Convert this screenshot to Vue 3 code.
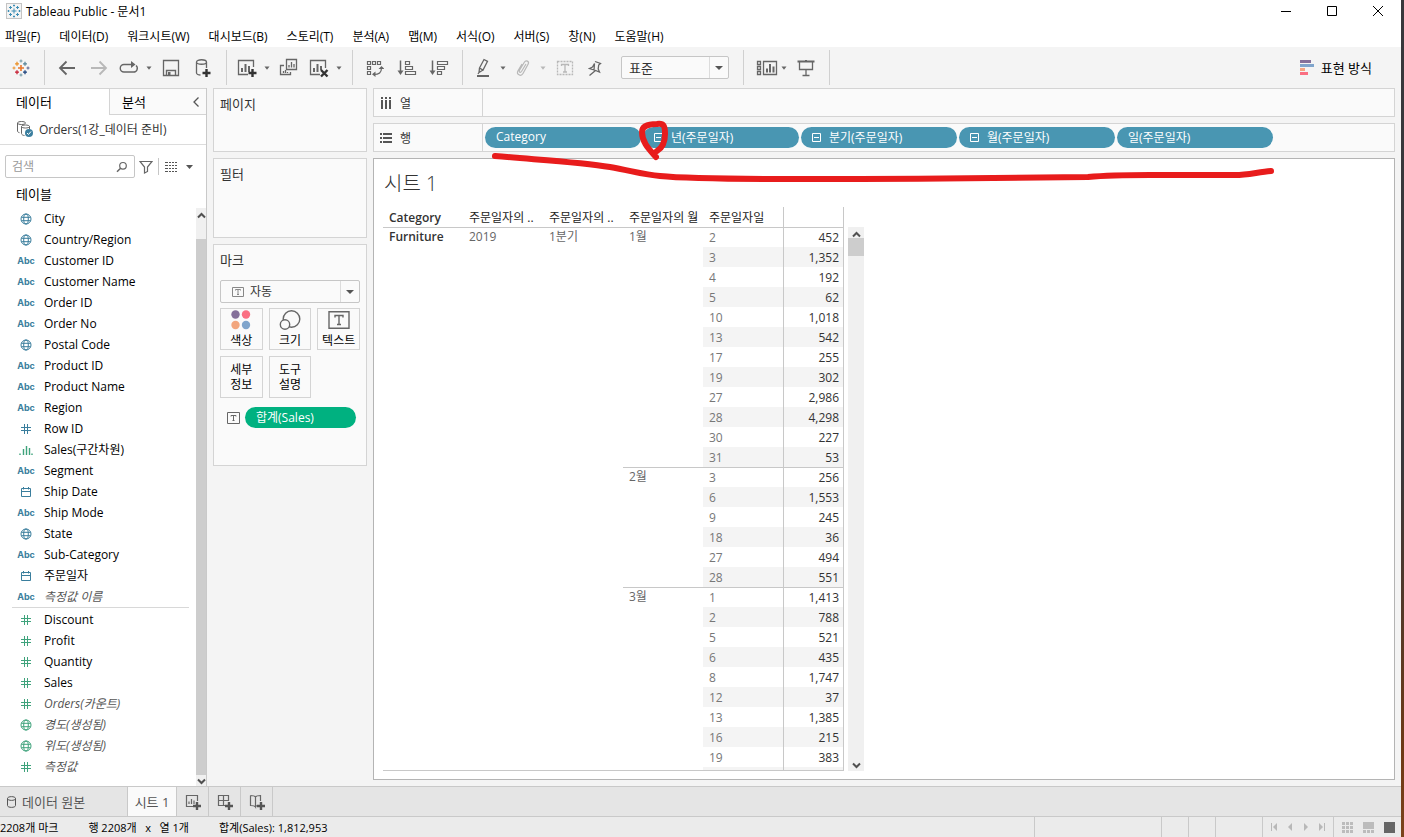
<script setup>
import { ref } from 'vue'

const menus = ['파일(F)', '데이터(D)', '워크시트(W)', '대시보드(B)', '스토리(T)', '분석(A)', '맵(M)', '서식(O)', '서버(S)', '창(N)', '도움말(H)']

const dimensions = [
  { name: 'City', type: 'geo' },
  { name: 'Country/Region', type: 'geo' },
  { name: 'Customer ID', type: 'abc' },
  { name: 'Customer Name', type: 'abc' },
  { name: 'Order ID', type: 'abc' },
  { name: 'Order No', type: 'abc' },
  { name: 'Postal Code', type: 'geo' },
  { name: 'Product ID', type: 'abc' },
  { name: 'Product Name', type: 'abc' },
  { name: 'Region', type: 'abc' },
  { name: 'Row ID', type: 'num' },
  { name: 'Sales(구간차원)', type: 'bin' },
  { name: 'Segment', type: 'abc' },
  { name: 'Ship Date', type: 'date' },
  { name: 'Ship Mode', type: 'abc' },
  { name: 'State', type: 'geo' },
  { name: 'Sub-Category', type: 'abc' },
  { name: '주문일자', type: 'date' },
  { name: '측정값 이름', type: 'abc', generated: true }
]
const measures = [
  { name: 'Discount', type: 'num' },
  { name: 'Profit', type: 'num' },
  { name: 'Quantity', type: 'num' },
  { name: 'Sales', type: 'num' },
  { name: 'Orders(카운트)', type: 'num', generated: true },
  { name: '경도(생성됨)', type: 'geo', generated: true },
  { name: '위도(생성됨)', type: 'geo', generated: true },
  { name: '측정값', type: 'num', generated: true }
]
const groups = [
  { id: 'dimension', fields: dimensions },
  { id: 'measure', fields: measures }
]

const rowPills = [
  { label: 'Category', expandable: false },
  { label: '년(주문일자)', expandable: true },
  { label: '분기(주문일자)', expandable: true },
  { label: '월(주문일자)', expandable: true },
  { label: '일(주문일자)', expandable: false }
]

const headers = ['Category', '주문일자의 ..', '주문일자의 ..', '주문일자의 월', '주문일자일', '']
const months = [
  { name: '1월', days: [[2, '452'], [3, '1,352'], [4, '192'], [5, '62'], [10, '1,018'], [13, '542'], [17, '255'], [19, '302'], [27, '2,986'], [28, '4,298'], [30, '227'], [31, '53']] },
  { name: '2월', days: [[3, '256'], [6, '1,553'], [9, '245'], [18, '36'], [27, '494'], [28, '551']] },
  { name: '3월', days: [[1, '1,413'], [2, '788'], [5, '521'], [6, '435'], [8, '1,747'], [12, '37'], [13, '1,385'], [16, '215'], [19, '383']] }
]
const rows = months.flatMap((m) =>
  m.days.map(([day, value], i) => ({ day, value, first: i === 0, month: m.name, span: m.days.length }))
)

const search = ref('')
const fit = ref('표준')
const mark = ref('자동')
</script>

<template>
  <div class="desktop">
    <div class="window">
      <header class="titlebar">
        <svg class="app-icon" width="16" height="16" viewBox="0 0 16 16">
          <rect x="0.5" y="0.5" width="15" height="15" fill="#f4f4f4" stroke="#c4c4c4" />
          <path d="M8 5.5v5M5.5 8h5M4.5 3v3M3 4.500h3M11.500 3v3M10 4.500h3M4.500 10v3M3 11.500h3M11.500 10v3M10 11.500h3M8 1.500v2M7 2.500h2M8 12.500v2M7 13.500h2M2.500 7v2M1.500 8h2M13.500 7v2M12.500 8h2" stroke="#3f8fb5" fill="none" />
        </svg>
        <span class="title">Tableau Public - 문서1</span>
        <div class="win-buttons">
          <button aria-label="최소화"><svg width="12" height="12" viewBox="0 0 12 12"><path d="M1 6.500h10" /></svg></button>
          <button aria-label="최대화"><svg width="12" height="12" viewBox="0 0 12 12"><path d="M1.500 1.500h9v9h-9z" /></svg></button>
          <button aria-label="닫기"><svg width="12" height="12" viewBox="0 0 12 12"><path d="M1 1l10 10M11 1L1 11" /></svg></button>
        </div>
      </header>

      <nav class="menubar">
        <button v-for="m in menus" :key="m">{{ m }}</button>
      </nav>

      <div class="toolbar">
        <button class="tool start" aria-label="시작 페이지">
          <svg width="18" height="18" viewBox="0 0 18 18" fill="none" stroke-width="1.300">
            <path d="M9 6v6M6 9h6" stroke="#e8762c" stroke-width="1.600" />
            <path d="M5 2.800v4M3 4.800h4" stroke="#eb9129" />
            <path d="M13 2.800v4M11 4.800h4" stroke="#59879b" />
            <path d="M5 11.200v4M3 13.200h4" stroke="#c72035" />
            <path d="M13 11.200v4M11 13.200h4" stroke="#1f447e" />
            <path d="M9 0.500v3M7.500 2h3" stroke="#7099a6" stroke-width="1" />
            <path d="M9 14.500v3M7.500 16h3" stroke="#7099a6" stroke-width="1" />
            <path d="M2 7.500v3M0.500 9h3" stroke="#eb912c" stroke-width="1" />
            <path d="M16 7.500v3M14.500 9h3" stroke="#5b6591" stroke-width="1" />
          </svg>
        </button>
        <i class="sep"></i>
        <button class="tool" aria-label="실행 취소"><svg width="18" height="18" viewBox="0 0 18 18"><path d="M17 9H2M8.500 2.500L2 9l6.500 6.500" stroke-width="1.800" /></svg></button>
        <button class="tool dim" aria-label="다시 실행"><svg width="18" height="18" viewBox="0 0 18 18"><path d="M1 9h15M9.500 2.500L16 9l-6.500 6.500" stroke-width="1.800" /></svg></button>
        <button class="tool split" aria-label="재생"><svg width="20" height="18" viewBox="0 0 20 18"><path d="M14 5.500H5a3.500 3.500 0 0 0 0 7.500h9.500a3.700 3.700 0 0 0 2.500-6.500" stroke-width="1.400" /><path d="M12 2l4.500 3.500L12 9z" fill="currentColor" stroke="none" /></svg></button>
        <button class="tool caret" aria-label="재생 옵션"><svg width="6" height="4" viewBox="0 0 6 4"><path d="M0.500 0.500h5L3 3.800z" class="solid" /></svg></button>
        <button class="tool" aria-label="저장"><svg width="18" height="18" viewBox="0 0 18 18"><path d="M1.500 1.500h15v15h-15z" /><path d="M4.500 16.500v-5h9v5" stroke-width="1.400" /><path d="M6 13h2.500v3H6z" class="solid" /></svg></button>
        <button class="tool" aria-label="새 데이터 원본"><svg width="18" height="20" viewBox="0 0 18 20"><path d="M2.500 4c0-3 10-3 10 0s-10 3-10 0v11c0 1 2 2 4 2M12.500 4v6" /><path d="M12.500 11v8M8.500 15h8" class="heavy" /></svg></button>
        <i class="sep"></i>
        <button class="tool split" aria-label="새 워크시트"><svg width="20" height="20" viewBox="0 0 20 20"><path d="M16.500 9V2.500h-15v14H11" /><path d="M5 14v-4M8.500 14V6M12 14V8" stroke-width="2" /><path d="M15.500 11v8M11.500 15h8" class="heavy" /></svg></button>
        <button class="tool caret" aria-label="새 시트 옵션"><svg width="6" height="4" viewBox="0 0 6 4"><path d="M0.500 0.500h5L3 3.800z" class="solid" /></svg></button>
        <button class="tool" aria-label="복제"><svg width="20" height="20" viewBox="0 0 20 20"><path d="M7.500 1.500h10v10h-10zM5 7.500H1.500v9h10V14" /><path d="M10 9.500V7M12.500 9.500V4M15 9.500V6M4.500 15v-2M6.500 15v-3M8.500 15v-1" stroke-width="1.300" /></svg></button>
        <button class="tool split" aria-label="시트 지우기"><svg width="20" height="20" viewBox="0 0 20 20"><path d="M16.500 10V2.500h-15v14H11" /><path d="M5 14v-4M8.500 14V6M12 12V8" stroke-width="2" /><path d="M12 12l6.500 6.500M18.500 12L12 18.500" class="heavy" /></svg></button>
        <button class="tool caret" aria-label="지우기 옵션"><svg width="6" height="4" viewBox="0 0 6 4"><path d="M0.500 0.500h5L3 3.800z" class="solid" /></svg></button>
        <i class="sep"></i>
        <button class="tool" aria-label="행과 열 바꾸기"><svg width="18" height="18" viewBox="0 0 18 18"><path d="M1.500 2.500h3v3h-3zM6.500 2.500h3v3h-3zM11.500 2.500h3v3h-3zM1.500 7.500h3v3h-3zM1.500 12.500h3v3h-3zM8 15.500c5 0 7.500-2 7.500-6.500" stroke-width="1.200" /><path d="M9.500 12.500v5.500L6 15.300zM12.500 10h6L15.500 7z" class="solid" /></svg></button>
        <button class="tool" aria-label="오름차순 정렬"><svg width="20" height="18" viewBox="0 0 20 18"><path d="M3.500 1.500v12" stroke-width="1.500" /><path d="M0.500 11.500h6L3.500 16z" class="solid" /><path d="M8.500 2.500h4v3h-4zM8.500 7.500h7v3h-7zM8.500 12.500h10v3h-10z" stroke-width="1.200" /></svg></button>
        <button class="tool" aria-label="내림차순 정렬"><svg width="20" height="18" viewBox="0 0 20 18"><path d="M3.500 1.500v12" stroke-width="1.500" /><path d="M0.500 11.500h6L3.500 16z" class="solid" /><path d="M8.500 2.500h10v3h-10zM8.500 7.500h7v3h-7zM8.500 12.500h4v3h-4z" stroke-width="1.200" /></svg></button>
        <i class="sep"></i>
        <button class="tool split" aria-label="하이라이터"><svg width="14" height="20" viewBox="0 0 14 20"><path d="M3.500 10L8 1.500l3.500 1.800-4.500 8.700zM3.500 10L3 14.500l4-2.500M3 14.500L2 16" /><path d="M1 18h12" stroke-width="2" /></svg></button>
        <button class="tool caret" aria-label="하이라이터 옵션"><svg width="6" height="4" viewBox="0 0 6 4"><path d="M0.500 0.500h5L3 3.800z" class="solid" /></svg></button>
        <button class="tool split dim" aria-label="그룹"><svg width="16" height="18" viewBox="0 0 16 18"><path d="M11 5l-4.500 7.500c-1 1.500-3 .5-2-1.200L9.500 3c1.500-2.500 5-.5 3.700 2L8 14.500c-2 3.500-7 1-5-2.800L7 5" stroke-width="1.200" /></svg></button>
        <button class="tool caret dim" aria-label="그룹 옵션"><svg width="6" height="4" viewBox="0 0 6 4"><path d="M0.500 0.500h5L3 3.800z" class="solid" /></svg></button>
        <button class="tool dim" aria-label="마크 레이블 표시"><svg width="18" height="16" viewBox="0 0 18 16"><path d="M1.500 1.500h15v13h-15z" stroke-dasharray="2 1" /><path d="M5.500 6V4.500h7V6M9 4.500v7.500M7 12h4" stroke-width="1.300" /></svg></button>
        <button class="tool split" aria-label="축 고정"><svg width="14" height="18" viewBox="0 0 14 18"><path d="M7 2.500l5.500 2-1.800 1.500-.5 4 1.300 3-4-1.500L1.500 16.500M6 11L1.500 9.500l3-1.500 2-3.500z" stroke-width="1.300" /></svg></button>
        <div class="select fit">
          <select v-model="fit" aria-label="맞춤"><option>표준</option></select>
        </div>
        <i class="sep"></i>
        <button class="tool split cards-tool" aria-label="카드 표시"><svg width="22" height="18" viewBox="0 0 22 18"><path d="M1.500 2.500h3v3h-3zM1.500 7.500h3v3h-3zM1.500 12.500h3v3h-3zM7.500 2.500h13v13h-13z" stroke-width="1.300" /><path d="M11 13.500v-4M14 13.500V5M17.500 13.500V7.500" stroke-width="2" /></svg></button>
        <button class="tool caret" aria-label="카드 옵션"><svg width="6" height="4" viewBox="0 0 6 4"><path d="M0.500 0.500h5L3 3.800z" class="solid" /></svg></button>
        <button class="tool" aria-label="프레젠테이션 모드"><svg width="18" height="18" viewBox="0 0 18 18"><path d="M2.500 3v7.500h13V3M9 10.500v6M5.500 16.500h7" stroke-width="1.300" /><path d="M0.500 2.500h17M9 1v1" stroke-width="2" /></svg></button>
        <i class="sep"></i>
        <button class="show-me">
          <svg width="15" height="15" viewBox="0 0 15 15"><path d="M0 0h11v3H0z" fill="#85709a" /><path d="M0 4h14v3H0z" fill="#80a5cc" /><path d="M0 8h5v3H0z" fill="#f4a582" /><path d="M0 12h8v3H0z" fill="#fa6f82" /></svg>
          표현 방식
        </button>
      </div>

      <main class="workspace">
        <aside class="sidebar">
          <div class="side-tabs">
            <button class="side-tab active">데이터</button>
            <button class="side-tab">분석
              <svg width="8" height="12" viewBox="0 0 8 12"><path d="M6.500 1.500L2 6l4.500 4.500" fill="none" stroke="#555" stroke-width="1.300" /></svg>
            </button>
          </div>
          <div class="source">
            <svg width="18" height="18" viewBox="0 0 18 18" fill="none" stroke="#666">
              <path d="M1.500 3c0-2 8-2 8 0s-8 2-8 0v8c0 1 1 1.500 2 1.700M5.500 6.500c0-2 8-2 8 0s-8 2-8 0v7c0 1 1.500 2 3 2M13.500 6.500V9" />
              <circle cx="13" cy="13" r="4" fill="#3c7f9f" stroke="none" />
              <path d="M11 13l1.500 1.500 2.500-3" stroke="#fff" />
            </svg>
            <span>Orders(1강_데이터 준비)</span>
          </div>
          <div class="search-row">
            <div class="search">
              <input v-model="search" type="text" placeholder="검색" aria-label="검색" />
              <svg width="12" height="12" viewBox="0 0 12 12" fill="none" stroke="#666" stroke-width="1.200"><circle cx="7" cy="4.800" r="3.300" /><path d="M4.600 7.200L1 10.800" stroke-width="1.500" /></svg>
            </div>
            <button class="plain filter" aria-label="필터링"><svg width="14" height="14" viewBox="0 0 14 14"><path d="M1 1.500h12L8.500 7v4.500l-3 1.500V7z" fill="none" stroke="#666" stroke-width="1.200" /></svg></button>
            <button class="plain view" aria-label="보기 옵션">
              <svg width="12" height="10" viewBox="0 0 12 10"><path d="M0 .5h12M0 3.500h12M0 6.500h12M0 9.500h12" stroke="#555" stroke-dasharray="3 1 2 1 2 1" /></svg>
              <svg width="7" height="4" viewBox="0 0 7 4"><path d="M0 0h7L3.500 4z" fill="#555" /></svg>
            </button>
          </div>
          <h2 class="tables-title">테이블</h2>
          <div class="fields">
            <div class="field-groups">
              <ul v-for="g in groups" :key="g.id" :class="['group', g.id]">
                <li v-for="f in g.fields" :key="f.name" :class="{ generated: f.generated, bin: f.type === 'bin' }">
                  <span class="ficon">
                    <b v-if="f.type === 'abc'">Abc</b>
                    <svg v-else-if="f.type === 'geo'" width="12" height="12" viewBox="0 0 12 12"><circle cx="6" cy="6" r="5" /><ellipse cx="6" cy="6" rx="2.300" ry="5" /><path d="M1.500 4.300h9M1.500 7.700h9" /></svg>
                    <svg v-else-if="f.type === 'num'" width="12" height="12" viewBox="0 0 12 12"><path d="M4.500 1v10M7.500 1v10M1 4.500h10M1 7.500h10" /></svg>
                    <svg v-else-if="f.type === 'date'" width="12" height="12" viewBox="0 0 12 12"><path d="M1.500 2.500h9v8h-9zM1.500 5.500h9M3.500 1v2.500M8.500 1v2.500" /></svg>
                    <svg v-else width="14" height="10" viewBox="0 0 14 10"><path d="M1 8.500v1.500M4.500 4v6M7.500 1v9M10.500 3v7M13 8.500v1.500" stroke-width="1.400" /></svg>
                  </span>
                  <span class="fname">{{ f.name }}</span>
                </li>
              </ul>
            </div>
            <div class="scroll side">
              <svg width="9" height="7" viewBox="0 0 9 7"><path d="M1 5.500L4.500 2 8 5.500" /></svg>
              <i class="thumb"></i>
              <svg width="9" height="7" viewBox="0 0 9 7"><path d="M1 1.500L4.500 5 8 1.500" /></svg>
            </div>
          </div>
        </aside>

        <section class="cards">
          <div class="card pages"><h3>페이지</h3></div>
          <div class="card filters"><h3>필터</h3></div>
          <div class="card marks">
            <h3>마크</h3>
            <div class="select mark">
              <svg width="12" height="12" viewBox="0 0 12 12"><path d="M.5 1.500h11v9H.5zM3.500 4.500v-1h5v1M6 3.500v5M5 8.500h2" fill="none" stroke="#888" /></svg>
              <select v-model="mark" aria-label="마크 유형"><option>자동</option></select>
            </div>
            <div class="mark-grid">
              <button>
                <svg width="20" height="20" viewBox="0 0 20 20"><circle cx="4.500" cy="4.500" r="4.200" fill="#85709a" /><circle cx="15" cy="4.500" r="4.200" fill="#fa6f82" /><circle cx="4.500" cy="15" r="4.200" fill="#f2a67e" /><circle cx="15" cy="15" r="4.200" fill="#80a5cc" /></svg>
                <span>색상</span>
              </button>
              <button>
                <svg width="22" height="20" viewBox="0 0 22 20" fill="none" stroke="#666" stroke-width="1.400"><circle cx="12.500" cy="9" r="8.300" /><circle cx="6" cy="14.500" r="4.700" fill="#fafafa" /></svg>
                <span>크기</span>
              </button>
              <button>
                <svg width="22" height="20" viewBox="0 0 22 20" fill="none" stroke="#666" stroke-width="1.400"><path d="M1 1.700h20v16.600H1z" /><path d="M7 7.500V5.500h8v2M11 5.500v9M9 14.500h4" /></svg>
                <span>텍스트</span>
              </button>
              <button><span>세부<br />정보</span></button>
              <button><span>도구<br />설명</span></button>
            </div>
            <div class="mark-pill">
              <svg width="13" height="12" viewBox="0 0 13 12"><path d="M.5 .5h12v11H.5zM4 4.500v-1h5v1M6.500 3.500v5M5.500 8.500h2" fill="none" stroke="#666" /></svg>
              <button class="pill measure-pill">합계(Sales)</button>
            </div>
          </div>
        </section>

        <section class="canvas">
          <div class="shelf">
            <div class="shelf-name">
              <svg width="12" height="12" viewBox="0 0 12 12"><path d="M2 0v2M6 0v2M10 0v2M2 3v9M6 3v9M10 3v9" stroke="#555" stroke-width="2" /></svg>열
            </div>
            <div class="shelf-body"></div>
          </div>
          <div class="shelf">
            <div class="shelf-name">
              <svg width="12" height="12" viewBox="0 0 12 12"><path d="M0 2h2M0 6h2M0 10h2M3 2h9M3 6h9M3 10h9" stroke="#555" stroke-width="2" /></svg>행
            </div>
            <div class="shelf-body">
              <button v-for="p in rowPills" :key="p.label" class="pill">
                <svg v-if="p.expandable" class="expand" width="9" height="9" viewBox="0 0 9 9"><path d="M.5 .5h8v8h-8zM2 4.500h5" fill="none" stroke="#fff" /></svg>
                {{ p.label }}
              </button>
            </div>
          </div>

          <div class="sheet">
            <h1>시트 1</h1>
            <div class="view-area">
              <table class="crosstab">
                <thead>
                  <tr><th v-for="(h, i) in headers" :key="i" scope="col">{{ h }}</th></tr>
                </thead>
                <tbody>
                  <tr v-for="(r, i) in rows" :key="i" :class="{ first: r.first, band: i % 2 === 1 }">
                    <th v-if="i === 0" class="head cat" :rowspan="rows.length" scope="rowgroup">Furniture</th>
                    <td v-if="i === 0" class="head" :rowspan="rows.length">2019</td>
                    <td v-if="i === 0" class="head" :rowspan="rows.length">1분기</td>
                    <td v-if="r.first" class="head" :rowspan="r.span">{{ r.month }}</td>
                    <td class="day">{{ r.day }}</td>
                    <td class="value">{{ r.value }}</td>
                  </tr>
                </tbody>
                <tfoot>
                  <tr><td colspan="4"></td><td class="day"></td><td class="value"></td></tr>
                </tfoot>
              </table>
              <div class="scroll table-scroll">
                <svg width="9" height="7" viewBox="0 0 9 7"><path d="M1 5.500L4.500 2 8 5.500" /></svg>
                <i class="thumb"></i>
                <svg width="9" height="7" viewBox="0 0 9 7"><path d="M1 1.500L4.500 5 8 1.500" /></svg>
              </div>
            </div>
          </div>
        </section>
      </main>

      <div class="sheet-tabs">
        <button class="ds-tab">
          <svg width="9" height="12" viewBox="0 0 9 12"><path d="M.5 2.500c0-2.500 8-2.500 8 0s-8 2.500-8 0v7c0 2.500 8 2.500 8 0v-7" fill="none" stroke="#555" /></svg>
          데이터 원본
        </button>
        <button class="sheet-tab">시트 1</button>
        <button class="new-tab" aria-label="새 워크시트"><svg width="16" height="16" viewBox="0 0 16 16"><path d="M12.500 7V1.500H1.500v11H8M4 10V7.500M6.500 10V5M9 10V6.500" /><path d="M12 8v8M8 12h8" class="heavy" /></svg></button>
        <button class="new-tab" aria-label="새 대시보드"><svg width="16" height="16" viewBox="0 0 16 16"><path d="M11.500 7V1.500H1.500v10H8M1.500 6.500h10M6.500 1.500v10" /><path d="M12 8v8M8 12h8" class="heavy" /></svg></button>
        <button class="new-tab" aria-label="새 스토리"><svg width="16" height="16" viewBox="0 0 16 16"><path d="M1.500 1.500c2 0 4 0 5 1.500 1-1.500 3-1.500 5-1.500V7M1.500 1.500v10c2 0 4 0 5 1.500V3M6.500 13c.5-1 1.500-1.500 2-1.500" /><path d="M12 8v8M8 12h8" class="heavy" /></svg></button>
      </div>

      <footer class="status">
        <span>2208개 마크</span>
        <span>행 2208개 &nbsp;&nbsp;x&nbsp;&nbsp; 열 1개</span>
        <span>합계(Sales): 1,812,953</span>
        <div class="status-cells">
          <i class="c127"></i><i class="c27"></i><i class="c27"></i><i class="c47"></i>
          <div class="pager">
            <button class="plain" aria-label="처음"><svg width="7" height="8" viewBox="0 0 7 8"><path d="M0 0h1v8H0zM6 0v8L2 4z" /></svg></button>
            <button class="plain" aria-label="이전"><svg width="7" height="8" viewBox="0 0 7 8"><path d="M5 0v8L1 4z" /></svg></button>
            <button class="plain" aria-label="다음"><svg width="7" height="8" viewBox="0 0 7 8"><path d="M1 0v8l4-4z" /></svg></button>
            <button class="plain" aria-label="마지막"><svg width="7" height="8" viewBox="0 0 7 8"><path d="M5 0h1v8H5zM0 0v8l4-4z" /></svg></button>
          </div>
          <div class="modes">
            <button class="plain" aria-label="시트 정렬기"><svg width="11" height="11" viewBox="0 0 11 11"><path d="M0 0h3v3H0zM4 0h3v3H4zM8 0h3v3H8zM0 4h3v3H0zM4 4h3v3H4zM8 4h3v3H8zM0 8h3v3H0zM4 8h3v3H4zM8 8h3v3H8z" /></svg></button>
            <button class="plain" aria-label="필름 스트립"><svg width="11" height="11" viewBox="0 0 11 11"><path d="M0 0h11v7H0zM0 8h3v3H0zM4 8h3v3H4zM8 8h3v3H8z" /></svg></button>
            <button class="plain on" aria-label="탭"><svg width="11" height="11" viewBox="0 0 11 11"><path d="M0 0h11v11H0z" /></svg></button>
          </div>
        </div>
      </footer>
    </div>

    <svg class="ink" width="1300" height="200" viewBox="0 0 1300 200">
      <path d="M656 157C650 150 642 143 642 132C642 125 649 124 657 124C664 123 665 126 665 134C665 143 662 148 657 151" />
      <path d="M495 156C540 160 580 162 610 167C632 171 645 175 660 176C700 180 780 179 860 179C940 179 1030 178 1088 177C1110 175 1130 175 1150 175H1235C1248 175 1258 172 1271 171" />
    </svg>
  </div>
</template>

<style>
body { background: #f4f4f4; }
</style>

<style scoped>
.desktop {
  position: relative;
  display: flex;
  min-height: 100vh;
  padding-right: 3px;
  background: linear-gradient(#38383c 0%, #38383c 55%, #6d3a16 90%, #7b431c 100%);
  font-family: "Open Sans", "Noto Sans CJK KR", sans-serif;
  font-size: 12px;
  color: #1e1e1e;
  box-sizing: border-box;
}
.desktop *, .desktop *::before, .desktop *::after { box-sizing: border-box; }
.window { flex: 1; min-width: 0; display: flex; flex-direction: column; background: #f4f4f4; }
button, input, select { font: inherit; color: inherit; margin: 0; padding: 0; border: 0; background: none; }
svg { flex: none; display: block; }
h1, h2, h3, ul { margin: 0; padding: 0; font-weight: 400; }
li { list-style: none; }

.titlebar { display: flex; align-items: center; height: 24px; padding: 0 0 2px 6px; background: #fff; color: #000; }
.title { margin-left: 4px; }
.win-buttons { margin-left: auto; display: flex; }
.win-buttons button { width: 46px; height: 22px; display: grid; place-items: center; }
.win-buttons svg { fill: none; stroke: #000; }

.menubar { display: flex; gap: 19px; height: 23px; padding: 3px 0 0 5px; background: #fff; color: #000; }
.menubar button { line-height: 20px; white-space: nowrap; }

.toolbar { display: flex; align-items: center; height: 41px; color: #666; }
.tool { width: 32px; height: 32px; display: flex; align-items: center; justify-content: center; }
.tool svg { fill: none; stroke: currentColor; stroke-width: 1.3; }
.tool .solid { fill: currentColor; stroke: none; }
.tool .heavy { stroke: #333; stroke-width: 2.400; }
.tool.start { width: 30px; margin-left: 6px; margin-right: 1px; }
.tool.split { width: 28px; }
.tool.cards-tool { justify-content: flex-end; }
.tool.caret { width: 12px; }
.tool.dim { color: #b8b8b8; }
.sep { width: 1px; height: 35px; margin: 0 6px 0 7px; background: #d0d0d0; }

.select { position: relative; display: flex; align-items: center; border: 1px solid #c6c6c6; border-radius: 2px; background: #fafafa; color: #333; }
.select select { flex: 1; width: 100%; height: 100%; appearance: none; outline: 0; }
.select::before { content: ""; position: absolute; right: 18px; top: 0; bottom: 0; width: 1px; background: #dcdcdc; }
.select::after { content: ""; position: absolute; right: 5px; top: 50%; margin-top: -2px; border: 4px solid transparent; border-top-color: #555; border-bottom: 0; }
.fit { width: 108px; height: 23px; margin: 0 7px 0 12px; font-size: 13px; }
.fit select { padding-left: 7px; }

.show-me { display: flex; align-items: center; gap: 6px; margin-left: auto; margin-right: 29px; font-size: 13px; color: #000; }

.workspace { flex: 1; display: flex; }
.sidebar { width: 207px; display: flex; flex-direction: column; background: #fff; border-right: 1px solid #c9c9c9; }
.side-tabs { display: flex; height: 27px; }
.side-tab { height: 27px; font-size: 13px; color: #000; text-align: left; }
.side-tab.active { width: 109px; padding: 0 0 2px 16px; border-top: 1px solid #d4d4d4; }
.side-tab:not(.active) { flex: 1; display: flex; align-items: center; justify-content: space-between; padding: 0 6px 0 12px; border: 1px solid #d4d4d4; border-right: 0; background: #fafafa; }
.source { display: flex; align-items: center; gap: 5px; height: 30px; padding: 0 0 1px 16px; border-bottom: 1px solid #dcdcdc; color: #333; }
.search-row { display: flex; align-items: center; padding: 10px 0 0 5px; }
.search { display: flex; align-items: center; width: 130px; height: 23px; padding: 0 6px; border: 1px solid #c6c6c6; border-radius: 2px; }
.search input { flex: 1; min-width: 0; outline: 0; }
.search input::placeholder { color: #999; opacity: 1; }
.plain { display: flex; align-items: center; }
.filter { margin-left: 4px; }
.view { gap: 9px; height: 17px; margin-left: 5px; padding-left: 6px; border-left: 1px solid #c6c6c6; }
.tables-title { height: 30px; padding: 4px 0 0 16px; font-size: 13px; line-height: 24px; color: #000; }
.fields { flex: 1; display: flex; }
.field-groups { flex: 1; }
.group li { display: flex; align-items: center; height: 21px; color: #000; }
.group.measure { margin: 0 7px 0 12px; padding-top: 1px; border-top: 1px solid #d8d8d8; }
.ficon { width: 16px; margin: 0 10px 0 18px; display: flex; justify-content: center; color: #3a7e9d; }
.measure .ficon { margin-left: 6px; }
.ficon b { font: 700 9px/12px Inter, sans-serif; }
.ficon svg { fill: none; stroke: currentColor; }
.measure .ficon, .bin .ficon { color: #3fa37c; }
.fname { line-height: 20px; white-space: nowrap; }
.generated .fname { font-style: italic; color: #555; }

.scroll { display: flex; flex-direction: column; align-items: center; justify-content: space-between; background: #f0f0f0; }
.scroll svg { fill: none; stroke: #505050; stroke-width: 2; }
.thumb { width: 100%; background: #cdcdcd; }
.side { width: 10px; padding: 4px 0 1px; }
.side .thumb { flex: 1; margin: 20px 0 3px; }

.cards { width: 154px; margin-left: 6px; display: flex; flex-direction: column; gap: 6px; }
.card { padding: 6px; background: #fafafa; border: 1px solid #d4d4d4; }
.card h3 { font-size: 13px; line-height: 18px; color: #333; }
.pages { height: 64px; }
.filters { height: 80px; }
.marks { min-height: 222px; }
.mark { height: 23px; margin-top: 11px; padding-left: 11px; }
.mark select { padding-left: 6px; }
.mark-grid { display: grid; grid-template-columns: repeat(3, 1fr); gap: 6px; margin-top: 5px; }
.mark-grid button { height: 42px; display: flex; flex-direction: column; align-items: center; justify-content: center; gap: 3px; border: 1px solid #d4d4d4; font-size: 12px; line-height: 15px; color: #000; white-space: nowrap; }
.mark-pill { display: flex; align-items: center; gap: 5px; margin: 9px 4px 0 7px; }
.pill { display: flex; align-items: center; gap: 8px; width: 156px; height: 21px; padding: 0 10px 2px 11px; border-radius: 11px; background: #4996b2; color: #fff; white-space: nowrap; }
.pill .expand { margin-top: 2px; }
.pill.measure-pill { flex: 1; width: auto; background: #00b180; }

.canvas { flex: 1; min-width: 0; display: flex; flex-direction: column; gap: 6px; margin: 0 6px 6px; }
.shelf { display: flex; height: 29px; border: 1px solid #d4d4d4; background: #fafafa; }
.shelf-name { display: flex; align-items: center; gap: 8px; width: 109px; padding-left: 6px; border-right: 1px solid #d4d4d4; color: #333; }
.shelf-body { flex: 1; display: flex; align-items: center; gap: 2px; padding-left: 2px; }
.sheet { flex: 1; padding: 11px 9px 8px; background: #fff; border: 1px solid #b4b4b4; }
.sheet h1 { padding: 1px 0 0 1px; margin-bottom: 10px; font-size: 20px; font-weight: 300; line-height: 26px; color: #333; }
.view-area { display: flex; gap: 4px; }
.crosstab { width: 461px; table-layout: fixed; border-collapse: separate; border-spacing: 0; border-bottom: 1px solid #c8c8c8; }
.crosstab th, .crosstab td { height: 20px; padding: 0 0 0 6px; line-height: 18px; text-align: left; white-space: nowrap; font-weight: 400; overflow: hidden; }
.crosstab thead th { width: 80px; padding-top: 2px; vertical-align: bottom; color: #222; }
.crosstab thead th:first-child, .crosstab .cat { font-weight: 600; color: #333; }
.crosstab thead th:last-child { width: 61px; border-left: 1px solid #c8c8c8; border-right: 1px solid #c8c8c8; }
.crosstab .head { vertical-align: top; color: #666; }
.crosstab .head.cat { color: #333; }
.crosstab .first > * { border-top: 1px solid #c8c8c8; }
.crosstab .day { color: #777; }
.crosstab .value { padding: 0 4px 0 0; text-align: right; color: #333; border-left: 1px solid #c8c8c8; border-right: 1px solid #c8c8c8; }
.crosstab tbody tr:not(.first) td { padding-top: 2px; }
.crosstab .band .day, .crosstab .band .value { background: #f4f4f4; }
.crosstab tfoot td { height: 3px; padding: 0; line-height: 3px; }
.crosstab tfoot .day, .crosstab tfoot .value { background: #f4f4f4; }
.table-scroll { width: 16px; margin-top: 20px; padding: 4px 0 2px; }
.table-scroll .thumb { height: 18px; margin-bottom: auto; }

.sheet-tabs { display: flex; height: 30px; border-top: 1px solid #c9c9c9; background: #e5e5e5; font-size: 13px; color: #555; }
.sheet-tabs button { display: flex; align-items: center; justify-content: center; border-right: 1px solid #c9c9c9; }
.sheet-tabs .ds-tab { width: 128px; gap: 6px; justify-content: flex-start; padding-left: 7px; }
.sheet-tabs .sheet-tab { width: 49px; background: #fafafa; }
.sheet-tabs .new-tab { width: 32px; }
.new-tab svg { fill: none; stroke: #666; stroke-width: 1.200; }
.new-tab .heavy { stroke: #555; stroke-width: 2.400; }

.status { display: flex; align-items: center; gap: 30px; height: 21px; border-top: 1px solid #c9c9c9; background: #ebebeb; color: #000; font-size: 11px; white-space: nowrap; }
.status-cells { display: flex; align-self: stretch; margin-left: auto; }
.status-cells > * { border-left: 1px solid #c9c9c9; }
.c127 { width: 127px; }
.c27 { width: 27px; }
.c47 { width: 47px; }
.pager { display: flex; align-items: center; gap: 9px; width: 71px; padding-left: 8px; fill: #b8b8b8; }
.modes { display: flex; align-items: center; gap: 10px; width: 68px; padding-left: 8px; fill: #bcbcbc; }
.modes .on { fill: #666; }

.ink { position: absolute; left: 0; top: 0; pointer-events: none; fill: none; stroke: #e81c1c; stroke-width: 6; stroke-linecap: round; stroke-linejoin: round; }
</style>
